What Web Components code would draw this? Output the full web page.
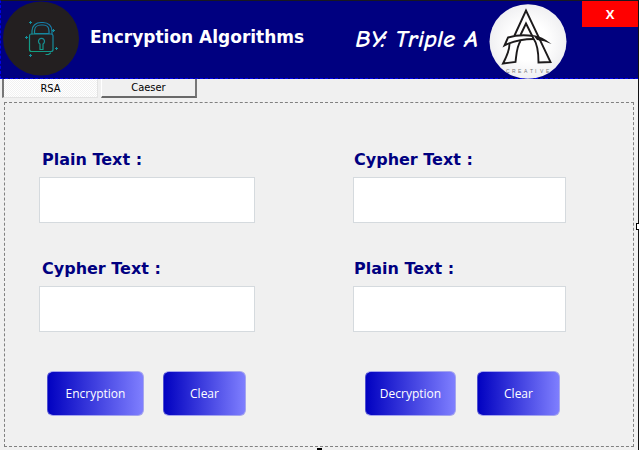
<!DOCTYPE html>
<html lang="en">
<head>
<meta charset="utf-8">
<title>Encryption Algorithms</title>
<style>
html, body { height: 100%; }
body { margin: 0; background: #f0f0f0; font-family: "DejaVu Sans", sans-serif; }
</style>
</head>
<body>
<cipher-window>
  <app-header slot="header"></app-header>
  <tab-button slot="tabs" selected>RSA</tab-button>
  <tab-button slot="tabs">Caeser</tab-button>
  <cipher-form>
    <text-field label="Plain Text :"></text-field>
    <text-field label="Cypher Text :"></text-field>
    <action-button slot="actions" size="large">Encryption</action-button>
    <action-button slot="actions">Clear</action-button>
  </cipher-form>
  <cipher-form class="decrypt">
    <text-field label="Cypher Text :"></text-field>
    <text-field label="Plain Text :"></text-field>
    <action-button slot="actions" size="medium">Decryption</action-button>
    <action-button slot="actions">Clear</action-button>
  </cipher-form>
</cipher-window>

<script>
const define = (name, html, setup) => {
  const template = document.createElement('template');
  template.innerHTML = html;
  customElements.define(name, class extends HTMLElement {
    constructor() {
      super();
      this.attachShadow({ mode: 'open' }).append(template.content.cloneNode(true));
    }
    connectedCallback() { if (setup) setup(this, this.shadowRoot); }
  });
};

define('lock-logo', `
<style>
:host { display: block; width: 78px; height: 76px; }
svg { display: block; width: 100%; height: 100%; }
</style>
<svg viewBox="0 0 78 76" aria-hidden="true">
  <defs><linearGradient id="g" gradientUnits="userSpaceOnUse" x1="50" y1="20" x2="28" y2="54">
    <stop offset="0" stop-color="#1579b5"/><stop offset=".45" stop-color="#16899a"/><stop offset="1" stop-color="#12a577"/>
  </linearGradient></defs>
  <ellipse cx="39" cy="37.500" rx="38" ry="37" fill="#231f20"/>
  <g fill="none" stroke="url(#g)" stroke-width="1.200" stroke-linecap="round" stroke-linejoin="round">
    <path d="M30 33V30C30 24.500 34 21.500 39 21.500H41C46.500 21.500 50 25 50 30V33"/>
    <path d="M32.500 32.500V30C32.500 26.500 35 24 39 24H41C45 24 47 26.500 47 30V32.500Z"/>
    <path d="M30 33H29Q27.500 33 27.500 35V48.500Q27.500 50.500 29.500 50.500H49Q51 50.500 51 48.500V35Q51 33 49 33H30"/>
    <path d="M38 43A3 3 0 1 1 41 43V48.500H38Z"/>
    <path d="M44 53.500H46.500L48.500 52"/>
  </g>
  <path fill="none" stroke="#148f9c" d="M28.500 20V23M27 21.500H30M51.500 28V31M50 29.500H53M24.500 35V38M23 36.500H26M54.500 46V49M53 47.500H56M28.500 53V56M27 54.500H30"/>
</svg>`);

define('studio-logo', `
<style>
:host { display: block; width: 78px; height: 75px; }
svg { display: block; width: 100%; height: 100%; }
text { font: 5px "Liberation Sans", sans-serif; fill: #777; }
</style>
<svg viewBox="0 0 78 75">
  <defs><radialGradient id="r"><stop offset=".5" stop-color="#fff"/><stop offset="1" stop-color="#f0f0f2"/></radialGradient></defs>
  <ellipse cx="39" cy="37.500" rx="38.500" ry="37.300" fill="url(#r)"/>
  <g fill="none" stroke="#1c1a1b" stroke-width="1.900" stroke-linejoin="miter">
    <path d="M25.500 31.500L37 6.500L61.500 58L49.500 58.500C49.500 49 48.500 40 44.500 34.500L37 19.500L31.500 31"/>
    <path d="M44.500 32C35 30.500 27 31 19 33.500L15.500 41.500C24 37 34 35 45 35"/>
    <path d="M20.500 40C20.500 46 18 52 14 59.500L26.500 58C27.500 50 27.500 43 31.500 37"/>
  </g>
  <path fill="#1c1a1b" d="M44 31Q53 32 62.500 40Q55 36.500 48 36Z"/>
  <text y="69" x="17 23 29 35 41 46 51 57">CREATIVE</text>
</svg>`);

define('app-header', `
<style>
:host { display: block; }
header { box-sizing: border-box; height: 79px; display: flex; align-items: flex-start; background: #000080; border: 1px dashed #0000f0; border-top: 1px solid #181820; border-right: 0; color: #fff; }
lock-logo { margin-left: 1px; }
h1 { margin: 23px 0 0 10px; font-size: 17px; line-height: 26px; font-weight: bold; white-space: nowrap; }
p { margin: 25px 11px 0 auto; font: italic bold 25px/26px "Segoe Script", "Comic Neue", cursive; white-space: nowrap; }
studio-logo { margin-top: 3px; }
button { margin-left: 15px; width: 56px; height: 26px; border: 0; padding: 0; background: #f00; color: #fff; font: bold 13px/26px "Open Sans", sans-serif; }
</style>
<header>
  <lock-logo></lock-logo>
  <h1>Encryption Algorithms</h1>
  <p>BY: Triple A</p>
  <studio-logo></studio-logo>
  <button type="button">X</button>
</header>`);

define('tab-button', `
<style>
:host { display: block; width: 96px; }
button { box-sizing: border-box; display: block; width: 100%; height: 19px; padding: 1px 0 0; border: 0; border-left: 1px solid #fff; border-right: 2px solid #777; border-bottom: 2px solid #696969; background: #f0f0f0; color: #000; font: 11px/14px "DejaVu Sans Condensed", "DejaVu Sans", sans-serif; }
:host([selected]) button { padding: 1px 0 0; border-left: 2px solid #777; border-right: 1px solid #e3e3e3; border-bottom: 1px solid #e3e3e3; background: repeating-conic-gradient(#f1f1f1 0 25%, #fff 0 50%) 0 0 / 2px 2px; }
</style>
<button type="button" role="tab"><slot></slot></button>`, (host, root) => {
  root.querySelector('button').setAttribute('aria-selected', host.hasAttribute('selected'));
});

define('text-field', `
<style>
:host { display: block; }
label { display: block; padding-left: var(--label-inset, 3px); margin-bottom: 6px; color: #000080; font-size: 16px; line-height: 22px; font-weight: bold; }
input { box-sizing: border-box; display: block; width: 100%; height: 46px; padding: 0 8px; border: 1px solid #d5dade; border-radius: 0; background: #fff; font: inherit; font-size: 14px; }
</style>
<label for="value"></label><input id="value" type="text">`, (host, root) => {
  root.querySelector('label').textContent = host.getAttribute('label');
});

define('action-button', `
<style>
:host { display: block; width: 83px; }
:host([size="large"]) { width: 97px; }
:host([size="medium"]) { width: 91px; }
button { box-sizing: border-box; width: 100%; height: 45px; display: block; padding: 0; border: 1px solid #a5a5ee; border-left-color: #5050d0; border-radius: 6px; background: linear-gradient(90deg, #0000c0, #8080ff) border-box; color: #fff; font: 12px/18px "Open Sans", sans-serif; }
</style>
<button type="button"><slot></slot></button>`);

define('cipher-form', `
<style>
:host { display: block; min-width: 0; }
:host(.decrypt) { --label-inset: 1px; }
form { display: grid; gap: 35px; }
.actions { display: flex; gap: 19px; padding: 4px 0 0 8px; }
:host(.decrypt) .actions { gap: 21px; padding-left: 12px; }
</style>
<form><slot></slot><div class="actions"><slot name="actions"></slot></div></form>`);

define('cipher-window', `
<style>
:host { display: flex; flex-direction: column; box-sizing: border-box; min-height: 100%; position: relative; border-right: 1px solid #111; background: #f0f0f0; }
nav { display: flex; gap: 3px; padding-left: 2px; }
main { flex: 1; box-sizing: border-box; margin: 4px 4px 3px; padding: 46px 67px 28px 34px; border: 1px dashed #808080; display: grid; grid-template-columns: 216fr 213fr; column-gap: 98px; align-content: start; }
.grip { position: absolute; box-sizing: border-box; background: #fff; border: 1px solid #000; }
.right { right: -2px; top: 50%; width: 4px; height: 7px; margin-top: -2px; }
.bottom { left: 50%; bottom: 0; width: 5px; height: 2px; margin-left: -2px; border-bottom: 0; background: #000; }
</style>
<slot name="header"></slot>
<nav role="tablist"><slot name="tabs"></slot></nav>
<main><slot></slot></main>
<span class="grip right"></span><span class="grip bottom"></span>`);
</script>
</body>
</html>
